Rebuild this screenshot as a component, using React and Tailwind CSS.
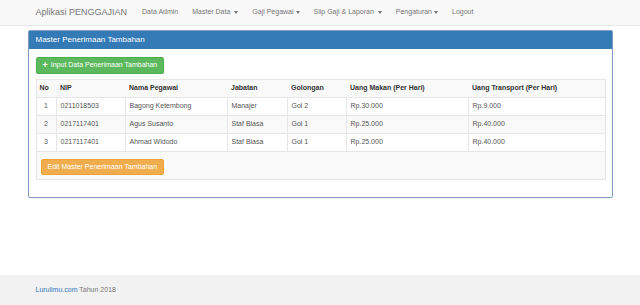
const rows = [
  { no: 1, nip: "0211018503", nama: "Bagong Ketembong", jabatan: "Manajer", gol: "Gol 2", makan: "Rp.30.000", transport: "Rp.9.000" },
  { no: 2, nip: "0217117401", nama: "Agus Susanto", jabatan: "Staf Biasa", gol: "Gol 1", makan: "Rp.25.000", transport: "Rp.40.000" },
  { no: 3, nip: "0217117401", nama: "Ahmad Widodo", jabatan: "Staf Biasa", gol: "Gol 1", makan: "Rp.25.000", transport: "Rp.40.000" },
];

const Caret = () => (
  <span className="ml-[2px] inline-block align-middle border-t-[3px] border-x-[2px] border-t-[#777] border-x-transparent" />
);

const App = () => {
  return (
    <div className="flex min-h-[305px] flex-col bg-white text-[7px] text-[#333]" style={{ fontFamily: '"Liberation Sans", Arial, sans-serif' }}>
      <nav className="h-[26px] border-b border-[#e7e7e7] bg-[#f8f8f8]">
        <div className="mx-auto flex h-[25px] w-[585px] items-center pl-[8px] text-[#777]">
          <span className="text-[9px]">Aplikasi PENGGAJIAN</span>
          <ul className="ml-[15px] flex items-center gap-[14px]">
            <li>Data Admin</li>
            <li>Master Data <Caret /></li>
            <li>Gaji Pegawai<Caret /></li>
            <li>Slip Gaji &amp; Laporan <Caret /></li>
            <li>Pengaturan<Caret /></li>
            <li>Logout</li>
          </ul>
        </div>
      </nav>

      <div className="mx-auto mt-[4px] w-[585px]">
        <div className="rounded-[2px] border border-[#7f9cbf] bg-white shadow-[0_1px_1px_rgba(0,0,0,0.05)]">
          <div className="flex h-[18px] items-center bg-[#337ab7] px-[7px] text-[8px] text-white">
            Master Penerimaan Tambahan
          </div>
          <div className="px-[7px] pb-[17px] pt-[8px]">
            <button className="flex h-[17px] items-center gap-[3px] rounded-[2px] border border-[#4cae4c] bg-[#5cb85c] px-[6px] text-[7px] text-white">
              <span className="text-[9px] font-bold leading-none">+</span>
              Input Data Penerimaan Tambahan
            </button>
            <table className="mt-[5px] w-[569px] table-fixed border-collapse border border-[#e6e6e6]">
              <colgroup>
                <col className="w-[20px]" />
                <col className="w-[69px]" />
                <col className="w-[102px]" />
                <col className="w-[60px]" />
                <col className="w-[59px]" />
                <col className="w-[122px]" />
                <col className="w-[137px]" />
              </colgroup>
              <tbody>
                <tr className="h-[18px] bg-[#f9f9f9] text-left font-bold text-[#333]">
                  <td className="px-[3px]">No</td>
                  <td className="px-[4px]">NIP</td>
                  <td className="px-[4px]">Nama Pegawai</td>
                  <td className="px-[4px]">Jabatan</td>
                  <td className="px-[4px]">Golongan</td>
                  <td className="px-[4px]">Uang Makan (Per Hari)</td>
                  <td className="px-[4px]">Uang Transport (Per Hari)</td>
                </tr>
                {rows.map((r, i) => (
                  <tr key={r.no} className={"h-[18px] border-t border-[#e6e6e6] text-[#555] " + (i % 2 === 1 ? "bg-[#f9f9f9]" : "bg-white")}>
                    <td className="text-center">{r.no}</td>
                    <td className="border-l border-[#e6e6e6] px-[4px]">{r.nip}</td>
                    <td className="border-l border-[#e6e6e6] px-[4px]">{r.nama}</td>
                    <td className="border-l border-[#e6e6e6] px-[4px]">{r.jabatan}</td>
                    <td className="border-l border-[#e6e6e6] px-[4px]">{r.gol}</td>
                    <td className="border-l border-[#e6e6e6] px-[4px]">{r.makan}</td>
                    <td className="border-l border-[#e6e6e6] px-[4px]">{r.transport}</td>
                  </tr>
                ))}
                <tr className="h-[27px] border-t border-[#e6e6e6] bg-[#f9f9f9]">
                  <td colSpan={7} className="px-[4px] pb-[4px] pt-[7px] align-top">
                    <button className="flex h-[16px] items-center rounded-[2px] border border-[#eea236] bg-[#f0ad4e] px-[6px] text-[7px] text-white">
                      Edit Master Penerimaan Tambahan
                    </button>
                  </td>
                </tr>
              </tbody>
            </table>
          </div>
        </div>
      </div>

      <footer className="mt-auto flex h-[30px] items-center bg-[#f2f2f2]">
        <div className="mx-auto w-[585px] pl-[8px] text-[#777]">
          <span className="text-[#337ab7]">Lurulimu.com</span> Tahun 2018
        </div>
      </footer>
    </div>
  );
};

export default App;
